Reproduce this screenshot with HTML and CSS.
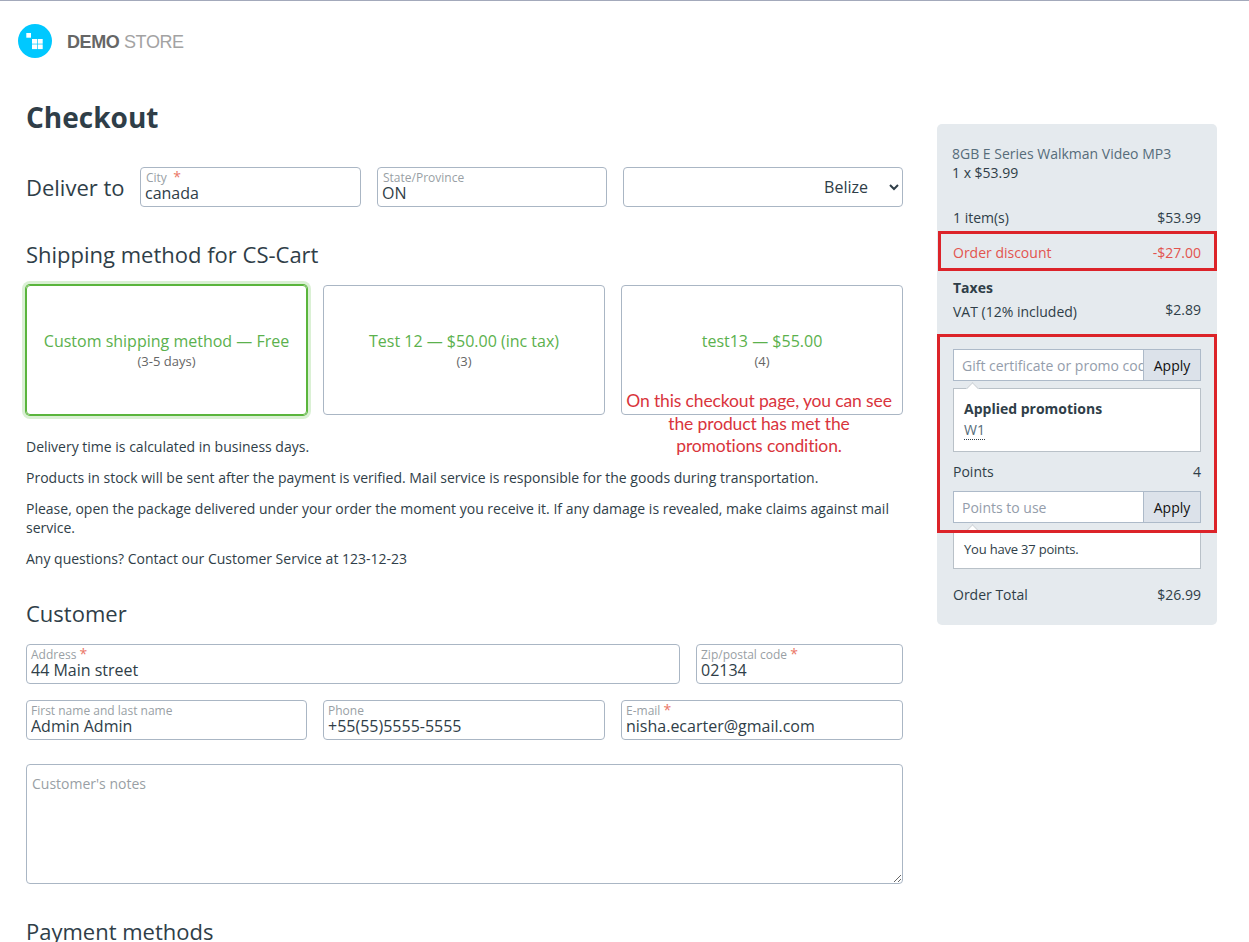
FILE: index.html
```html
<!DOCTYPE html>
<html lang="en">
<head>
  <meta charset="UTF-8" />
  <meta name="viewport" content="width=device-width, initial-scale=1.0"/>
  <title>Checkout</title>
  <link rel="stylesheet" href="styles.css">
</head>
<body>

<header class="header">
  <svg class="logo-icon" width="34" height="34" viewBox="0 0 34 34">
    <circle cx="17" cy="17" r="17" fill="#00c8ff"/>
    <g fill="#fff">
      <rect x="8.3" y="9" width="4.7" height="4.7"/>
      <rect x="14" y="15" width="5" height="4.7"/>
      <rect x="19.7" y="15" width="5" height="4.7"/>
      <rect x="14" y="20.4" width="5" height="4.7"/>
      <rect x="19.7" y="20.4" width="5" height="4.7"/>
    </g>
  </svg>
  <span class="logo-text"><b>DEMO</b> STORE</span>
</header>

<div class="page">
  <main class="checkout">
    <h1>Checkout</h1>

    <section class="deliver">
      <h2>Deliver to</h2>
      <div class="field">
        <label for="city">City &nbsp;<i>*</i></label>
        <input type="text" id="city" value="canada">
      </div>
      <div class="field">
        <label for="state">State/Province</label>
        <input type="text" id="state" value="ON">
      </div>
      <select id="country" class="country">
        <option>Belize</option>
      </select>
    </section>

    <h2 class="shipping-title">Shipping method for CS-Cart</h2>
    <section class="shipping">
      <div class="method selected">
        <span class="method-name">Custom shipping method — Free</span>
        <span class="method-time">(3-5 days)</span>
      </div>
      <div class="method">
        <span class="method-name">Test 12 — $50.00 (inc tax)</span>
        <span class="method-time">(3)</span>
      </div>
      <div class="method">
        <span class="method-name">test13 — $55.00</span>
        <span class="method-time">(4)</span>
      </div>
      <div class="note">On this checkout page, you can see<br>the product has met the<br>promotions condition.</div>
    </section>

    <section class="info">
      <p>Delivery time is calculated in business days.</p>
      <p>Products in stock will be sent after the payment is verified. Mail service is responsible for the goods during transportation.</p>
      <p>Please, open the package delivered under your order the moment you receive it. If any damage is revealed, make claims against mail service.</p>
      <p>Any questions? Contact our Customer Service at 123-12-23</p>
    </section>

    <h2 class="customer-title">Customer</h2>
    <section class="customer">
      <div class="row row-address">
        <div class="field">
          <label for="address">Address <i>*</i></label>
          <input type="text" id="address" value="44 Main street">
        </div>
        <div class="field">
          <label for="zip">Zip/postal code <i>*</i></label>
          <input type="text" id="zip" value="02134">
        </div>
      </div>
      <div class="row row-contact">
        <div class="field">
          <label for="name">First name and last name</label>
          <input type="text" id="name" value="Admin Admin">
        </div>
        <div class="field">
          <label for="phone">Phone</label>
          <input type="text" id="phone" value="+55(55)5555-5555">
        </div>
        <div class="field">
          <label for="email">E-mail <i>*</i></label>
          <input type="text" id="email" value="nisha.ecarter@gmail.com">
        </div>
      </div>
      <textarea class="notes" placeholder="Customer's notes"></textarea>
    </section>

    <h2 class="payment-title">Payment methods</h2>
  </main>

  <aside class="summary">
    <div class="product">
      <a>8GB E Series Walkman Video MP3</a>
      <div>1 x $53.99</div>
    </div>

    <div class="line"><span>1 item(s)</span><span>$53.99</span></div>
    <div class="line discount"><span>Order discount</span><span>-$27.00</span></div>
    <div class="line taxes">Taxes</div>
    <div class="line vat"><span>VAT (12% included)</span><span class="amount">$2.89</span></div>

    <div class="group promo">
      <input type="text" placeholder="Gift certificate or promo code">
      <button type="button">Apply</button>
    </div>
    <div class="tip applied">
      <b>Applied promotions</b>
      <a>W1</a>
    </div>

    <div class="line points"><span>Points</span><span>4</span></div>
    <div class="group">
      <input type="text" placeholder="Points to use">
      <button type="button">Apply</button>
    </div>
    <div class="tip balance">You have 37 points.</div>

    <div class="line total"><span>Order Total</span><span>$26.99</span></div>

    <div class="mark mark-discount"></div>
    <div class="mark mark-promo"></div>
  </aside>
</div>

</body>
</html>
```

FILE: styles.css
```css
* {
  box-sizing: border-box;
}
body {
  font-family: "Open Sans", sans-serif;
  font-size: 14px;
  line-height: 19px;
  color: #2f3e48;
  background: #fff;
  margin: 0;
  height: 942px;
  overflow: hidden;
  border-top: 1px solid #a3a9bb;
}
.header {
  display: flex;
  align-items: center;
  gap: 15px;
  padding: 23px 18px 0;
}
.logo-text {
  font-family: "Liberation Sans", Arial, sans-serif;
  font-size: 18px;
  letter-spacing: -0.4px;
  color: #a3a3a3;
  padding-top: 2px;
}
.logo-text b {
  color: #666;
}
.page {
  display: flex;
  align-items: flex-start;
  gap: 34px;
  padding-left: 26px;
}
.checkout {
  width: 877px;
}
h1 {
  font-size: 28px;
  line-height: 38px;
  font-weight: bold;
  margin: 40px 0 31px;
}
h2 {
  font-size: 22px;
  line-height: 30px;
  font-weight: normal;
  margin: 0;
}

/* fields */
.deliver {
  display: grid;
  grid-template-columns: 98px 221px 230px 280px;
  gap: 16px;
  align-items: center;
}
.deliver h2 {
  white-space: nowrap;
}
.field {
  position: relative;
}
.field label {
  position: absolute;
  left: 6px;
  top: 3px;
  font-size: 12px;
  line-height: 16px;
  color: #999fa5;
}
.customer .field label {
  left: 5px;
}
.field label i {
  font-style: normal;
  font-size: 14px;
  line-height: 12px;
  color: #ea7667;
}
.field input,
.country {
  display: block;
  width: 100%;
  height: 40px;
  border: 1px solid #aab6c4;
  border-radius: 4px;
  background: #fff;
  font-family: inherit;
  font-size: 16px;
  color: #2f3e48;
}
.field input {
  padding: 11px 4px 0;
}
.country {
  text-align-last: right;
  padding: 0 18px 0 4px;
}

/* shipping */
.shipping-title {
  margin: 32px 0 16px;
}
.shipping {
  position: relative;
  display: grid;
  grid-template-columns: 281px 282px 282px;
  gap: 16px;
}
.method {
  height: 130px;
  border: 1px solid #aab6c4;
  border-radius: 4px;
  display: flex;
  flex-direction: column;
  align-items: center;
  padding-top: 45px;
}
.method.selected {
  border-color: #5ab53c;
  box-shadow: 0 0 0 1px #5ab53c, 0 0 0 4px #daf0d4;
}
.method-name {
  font-size: 16px;
  line-height: 21px;
  color: #5bb14d;
}
.method-time {
  font-size: 13px;
  color: #666;
}
.note {
  position: absolute;
  left: 593px;
  top: 105px;
  width: 280px;
  font-family: Lato, sans-serif;
  font-size: 17.5px;
  letter-spacing: -0.13px;
  line-height: 22.5px;
  text-align: center;
  color: #d9343c;
}
.info {
  padding-top: 22px;
}
.info p {
  margin: 0 0 12px;
}

/* customer */
.customer-title {
  margin: 30px 0 16px;
}
.row {
  display: grid;
  gap: 16px;
  margin-bottom: 16px;
}
.row-address {
  grid-template-columns: 654px 207px;
}
.row-contact {
  grid-template-columns: 281px 282px 282px;
}
.notes {
  display: block;
  width: 100%;
  height: 120px;
  margin-top: 24px;
  padding: 9px 5px;
  border: 1px solid #aab6c4;
  border-radius: 4px;
  font-family: inherit;
  font-size: 14px;
  line-height: 19px;
}
.notes::placeholder {
  color: #999fa5;
}
.payment-title {
  margin-top: 32px;
}

/* order summary */
.summary {
  position: relative;
  width: 280px;
  height: 501px;
  margin-top: 66px;
  padding: 20px 16px 0;
  background: #e5eaee;
  border-radius: 5px;
}
.product {
  margin: 0 0 26px -1px;
}
.product a {
  color: #566c7a;
}
.line {
  display: flex;
  justify-content: space-between;
  margin-bottom: 16px;
}
.discount {
  color: #e2544e;
}
.taxes {
  font-weight: bold;
  margin-bottom: 5px;
}
.vat {
  margin-bottom: 28px;
}
.vat .amount {
  margin-top: -2px;
}
.group {
  display: flex;
  height: 32px;
  border: 1px solid #adbac9;
}
.group input {
  flex: 1;
  min-width: 0;
  border: none;
  padding: 0 0 0 8px;
  font-family: inherit;
  font-size: 14px;
}
.group input::placeholder {
  color: #949dab;
}
.group button {
  width: 57px;
  padding: 0;
  border: none;
  border-left: 1px solid #adbac9;
  background: #dce2ea;
  font-family: inherit;
  font-size: 14px;
  color: #111;
}
.tip {
  position: relative;
  margin-top: 7px;
  padding: 10px;
  border: 1px solid #b9c1c8;
  background: #fff;
}
.tip::before {
  content: "";
  position: absolute;
  left: 14px;
  top: -5px;
  width: 8px;
  height: 8px;
  border: 1px solid #cbd1d6;
  border-right: none;
  border-bottom: none;
  background: #fff;
  transform: rotate(45deg);
}
.applied {
  height: 64px;
}
.applied b {
  display: block;
}
.applied a {
  display: inline-block;
  margin-top: 3px;
  line-height: 18px;
  color: #566c7a;
  border-bottom: 1px dotted #2f3e48;
}
.points {
  margin: 10px 0;
}
.balance {
  height: 39px;
  padding-top: 9px;
  font-size: 13px;
  letter-spacing: -0.2px;
}
.total {
  margin-top: 16px;
}

/* red highlight frames */
.mark {
  position: absolute;
  border: 3px solid #dc2329;
}
.mark-discount {
  left: 1px;
  top: 107px;
  width: 279px;
  height: 40px;
}
.mark-promo {
  left: 0;
  top: 210px;
  width: 280px;
  height: 199px;
}
```
